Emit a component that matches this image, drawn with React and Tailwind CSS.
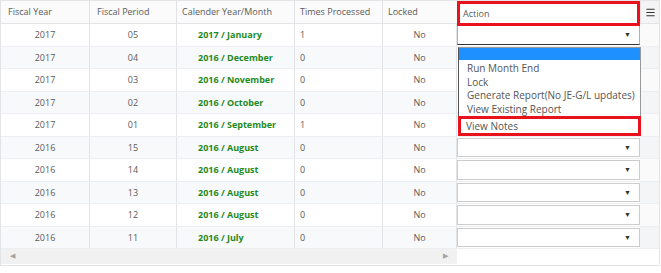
import { Menu } from 'lucide-react';

const rows = [
  ['2017', '05', '2017 / January', '1'],
  ['2017', '04', '2016 / December', '0'],
  ['2017', '03', '2016 / November', '0'],
  ['2017', '02', '2016 / October', '0'],
  ['2017', '01', '2016 / September', '1'],
  ['2016', '15', '2016 / August', '0'],
  ['2016', '14', '2016 / August', '0'],
  ['2016', '13', '2016 / August', '0'],
  ['2016', '12', '2016 / August', '0'],
  ['2016', '11', '2016 / July', '0'],
];

const options = ['Run Month End', 'Lock', 'Generate Report(No JE-G/L updates)', 'View Existing Report'];

function SelectBox({ focused }) {
  return (
    <div
      className={`h-full flex items-center justify-end pr-2 bg-white border ${
        focused ? 'border-[#8fb8e0] border-b-[#333]' : 'border-[#ccc]'
      }`}
    >
      <span className="text-[7px] text-[#333] leading-none">▼</span>
    </div>
  );
}

export default function App() {
  return (
    <div className="w-[661px] h-[273px] bg-white text-[9px] text-[#5a5a5a] font-['Open_Sans',sans-serif] relative">
      <div className="w-[660px] h-[266px] border border-[#e2e4e7] flex flex-col">
        {/* Header */}
        <div className="flex h-[23px] bg-[#fbfbfb] border-b border-[#e2e4e7] shrink-0">
          <div className="w-[89px] px-[7px] flex items-center border-r border-[#e2e4e7]">Fiscal Year</div>
          <div className="w-[87px] px-[7px] flex items-center border-r border-[#e2e4e7]">Fiscal Period</div>
          <div className="w-[118px] px-[5px] flex items-center border-r border-[#e2e4e7]">Calender Year/Month</div>
          <div className="w-[88px] px-[5px] flex items-center border-r border-[#e2e4e7] whitespace-nowrap">Times Processed</div>
          <div className="w-[74px] px-[5px] flex items-center">Locked</div>
          <div className="w-[183px] h-[25px] px-[3px] flex items-center border-[3px] border-[#e8111c] bg-white relative z-10">Action</div>
          <div className="flex-1 flex items-center justify-center border-l border-[#e2e4e7] bg-[#f4f4f4]">
            <Menu size={11} strokeWidth={2.5} className="text-[#333]" />
          </div>
        </div>

        {/* Body */}
        <div className="flex flex-col relative">
          {rows.map((r, i) => (
            <div key={i} className={`flex h-[22.5px] border-b border-[#eceef1] ${i % 2 ? 'bg-[#f8f9fb]' : 'bg-white'}`}>
              <div className="w-[89px] flex items-center justify-center border-r border-[#e2e4e7]">{r[0]}</div>
              <div className="w-[87px] flex items-center justify-center border-r border-[#e2e4e7]">{r[1]}</div>
              <div className="w-[118px] pl-[21px] flex items-center font-bold text-[#1e8a1e] border-r border-[#e2e4e7]">{r[2]}</div>
              <div className="w-[88px] px-[5px] flex items-center border-r border-[#e2e4e7]">{r[3]}</div>
              <div className="w-[74px] flex items-center justify-center border-r border-[#e2e4e7]">No</div>
              <div className="w-[183px] py-[1px] bg-white">
                {(i === 0 || i > 4) && <SelectBox focused={i === 0} />}
              </div>
              <div className={`flex-1 ${i % 2 ? 'bg-[#f4f5f7]' : 'bg-[#fafafa]'}`} />
            </div>
          ))}

          {/* Open dropdown list */}
          <div className="absolute left-[457px] top-[23px] w-[183px] bg-white border border-[#999] border-l-[#555] z-20 text-[#555] text-[10px]">
            <div className="h-[12px] bg-[#1e90ff]" />
            <div className="pt-[2px]">
              {options.map((o) => (
                <div key={o} className="h-[13.5px] leading-[13.5px] px-[8px] whitespace-nowrap">{o}</div>
              ))}
            </div>
            <div className="h-[20px] leading-[14px] px-[5px] border-[3px] border-[#e8111c] -mx-[1px] -mb-[1px]">View Notes</div>
          </div>
        </div>

        {/* Horizontal scrollbar */}
        <div className="flex h-[15px] mt-auto mb-[2px] shrink-0">
          <div className="w-[456px] bg-[#f1f1f1] flex items-center justify-between px-[9px] text-[7px] text-[#a3a3a3]">
            <span>◀</span>
            <span>▶</span>
          </div>
          <div className="flex-1 bg-white" />
        </div>
      </div>
    </div>
  );
}
